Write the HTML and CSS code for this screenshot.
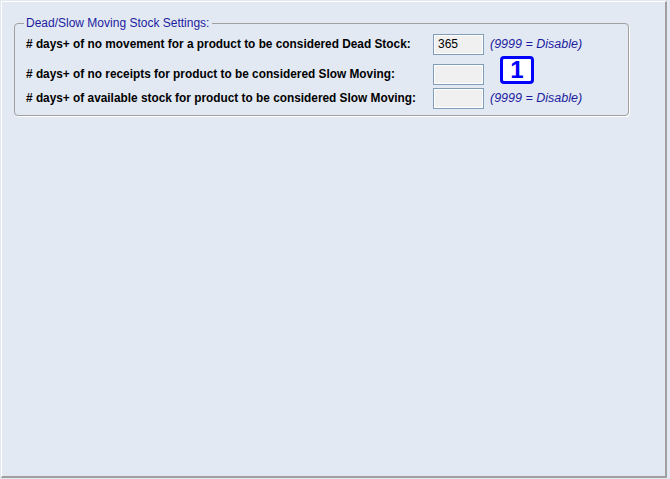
FILE: index.html
```html
<!DOCTYPE html>
<html>
<head>
<meta charset="utf-8">
<link rel="stylesheet" href="styles.css">
</head>
<body>
<div class="panel">
  <div class="group">
    <span class="legend">Dead/Slow Moving Stock Settings:</span>
    <div class="grid">
      <label class="lbl">#&nbsp;days+ of no movement for a product to be considered Dead Stock:</label>
      <div class="box">365</div>
      <span class="note">(9999 = Disable)</span>

      <label class="lbl">#&nbsp;days+ of no receipts for product to be considered Slow Moving:</label>
      <div class="box"></div>
      <span class="note"></span>

      <label class="lbl">#&nbsp;days+ of available stock for product to be considered Slow Moving:</label>
      <div class="box"></div>
      <span class="note">(9999 = Disable)</span>
    </div>
    <div class="badge">1</div>
  </div>
</div>
</body>
</html>
```

FILE: styles.css
```css
html, body {
  margin: 0;
  padding: 0;
  background: #e2e9f3;
  font-family: "Liberation Sans", Arial, sans-serif;
}
.panel {
  margin: 1px 0 0 1px;
  width: 666px;
  height: 477px;
  box-sizing: border-box;
  border-top: 1px solid #ffffff;
  border-left: 1px solid #ffffff;
  border-right: 2px solid #a0a0a0;
  border-bottom: 2px solid #a0a0a0;
  padding: 21px 0 0 12px;
}
.group {
  position: relative;
  width: 615px;
  height: 93px;
  box-sizing: border-box;
  border: 1px solid #a0a0a0;
  border-radius: 4px;
  box-shadow: 1px 1px 0 #ffffff;
  padding: 10px 0 0 11px;
}
.legend {
  position: absolute;
  left: 9px;
  top: -8px;
  padding: 0 3px 0 2px;
  background: #e2e9f3;
  color: #1c1ca0;
  font-size: 12px;
  line-height: 14px;
}
.grid {
  display: grid;
  grid-template-columns: 407px 57px auto;
  grid-template-rows: 21px 30px 24px;
  align-items: end;
}
.lbl {
  font-weight: bold;
  font-size: 11.85px;
  line-height: 21px;
  color: #000;
}
.box {
  width: 51px;
  height: 21px;
  box-sizing: border-box;
  border: 1px solid #7f9db9;
  box-shadow: inset 0 0 0 1px #ffffff;
  background: #f0f0f0;
  font-size: 12px;
  line-height: 19px;
  padding-left: 4px;
  color: #000;
}
.note {
  font-style: italic;
  font-size: 12.5px;
  line-height: 21px;
  color: #1c1ca0;
}
.badge {
  position: absolute;
  left: 485px;
  top: 32px;
  width: 34px;
  height: 28px;
  box-sizing: border-box;
  border: 3px solid #0000ff;
  border-radius: 4px;
  background: #ffffff;
  color: #0000ff;
  font-weight: bold;
  font-size: 24px;
  line-height: 22px;
  text-align: center;
}
```
